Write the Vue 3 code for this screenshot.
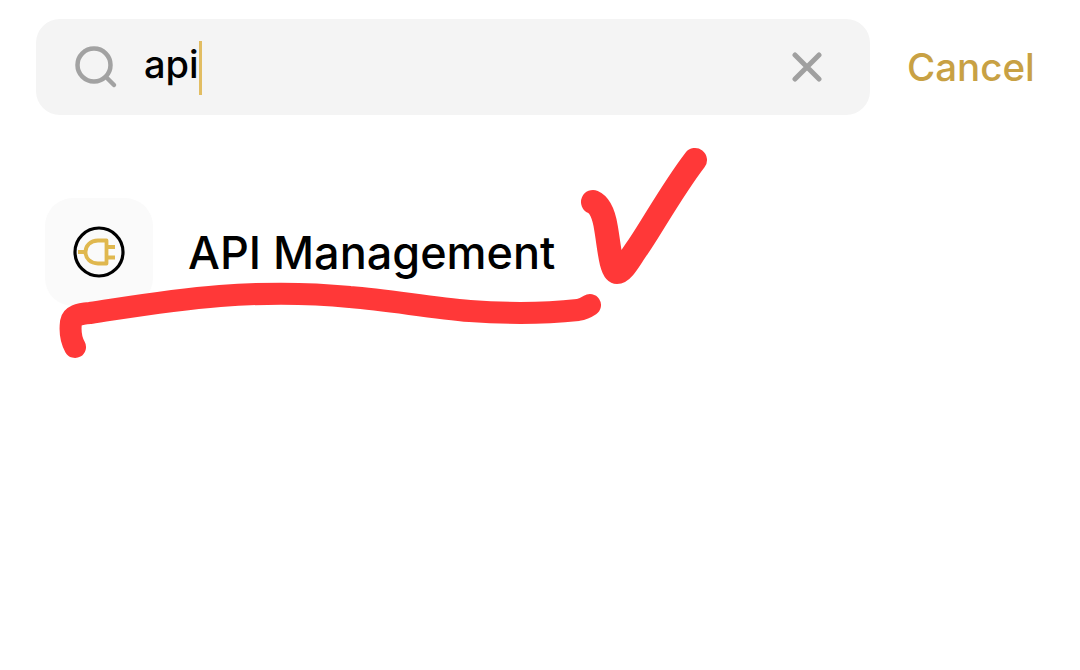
<script setup>
const query = 'api'
const result = 'API Management'
</script>

<template>
  <div class="page">
    <div class="top">
      <div class="search">
        <svg class="glass" viewBox="0 0 44 44" width="44" height="44" fill="none" stroke="#a2a2a2" stroke-width="4.5" stroke-linecap="round">
          <circle cx="20" cy="20" r="16.5" />
          <path d="M32 32 L40 40" />
        </svg>
        <span class="query">{{ query }}<i class="caret"></i></span>
        <svg class="clear" viewBox="0 0 30 30" width="30" height="30" fill="none" stroke="#a0a0a0" stroke-width="5" stroke-linecap="round">
          <path d="M3 3 L27 27 M27 3 L3 27" />
        </svg>
      </div>
      <span class="cancel">Cancel</span>
    </div>
    <div class="row">
      <div class="tile">
        <svg viewBox="0 0 52 52" width="52" height="52" fill="none">
          <circle cx="26" cy="26" r="24" stroke="#000" stroke-width="3.200" />
          <path d="M33.500 14.500 H25 C17.500 14.500 12.500 19.500 12.500 26 C12.500 32.500 17.500 37.500 25 37.500 H33.500 Z M33.500 21 H42 M33.500 31.500 H42 M5 26 H12.500" stroke="#e0b84f" stroke-width="3.800" stroke-linejoin="round" />
        </svg>
      </div>
      <span class="name">{{ result }}</span>
    </div>
    <svg class="ink" viewBox="0 0 1080 670" width="1080" height="670" fill="none" stroke="#ff3838" stroke-linecap="round" stroke-linejoin="round">
      <path stroke-width="22" d="M75 347 C71 340 70 330 71 322 C72 316 78 314 90 313 C130 307 170 300 220 296 C260 293 310 293 350 297 C390 300 430 308 470 311 C510 314 550 313 578 310 C584 309 587 307 590 305" />
      <path stroke-width="24" d="M593 202 C600 205 604 215 606 228 C609 245 611 272 617 272 C623 272 630 258 638 247 C650 230 672 190 695 160" />
    </svg>
  </div>
</template>

<style scoped>
.page {
  position: relative;
  width: 1080px;
  height: 670px;
  background: #fff;
  overflow: hidden;
  font-family: "Inter", "Liberation Sans", sans-serif;
}
.top {
  display: flex;
  align-items: center;
  padding: 19px 0 0 36px;
}
.search {
  flex: none;
  width: 834px;
  box-sizing: border-box;
  height: 96px;
  display: flex;
  align-items: center;
  padding: 0 48px 0 38px;
  background: #f4f4f4;
  border-radius: 24px;
}
.glass {
  display: block;
  flex: none;
}
.query {
  margin-left: 26px;
  flex: 1;
  font-size: 38px;
  color: #000;
  font-weight: 500;
  line-height: 50px;
}
.caret {
  display: inline-block;
  width: 3px;
  height: 54px;
  vertical-align: middle;
  background: #e2bd62;
}
.clear {
  display: block;
  flex: none;
}
.cancel {
  margin-left: 37px;
  font-size: 38.500px;
  font-weight: 500;
  color: #c8a144;
}
.row {
  display: flex;
  align-items: center;
  margin-top: 83px;
  padding-left: 45px;
}
.tile {
  width: 108px;
  height: 108px;
  border-radius: 28px;
  background: #fafafa;
  display: flex;
  align-items: center;
  justify-content: center;
}
.name {
  margin-left: 35px;
  font-size: 45px;
  font-weight: 500;
  color: #000;
}
.ink {
  position: absolute;
  left: 0;
  top: 0;
}
</style>
